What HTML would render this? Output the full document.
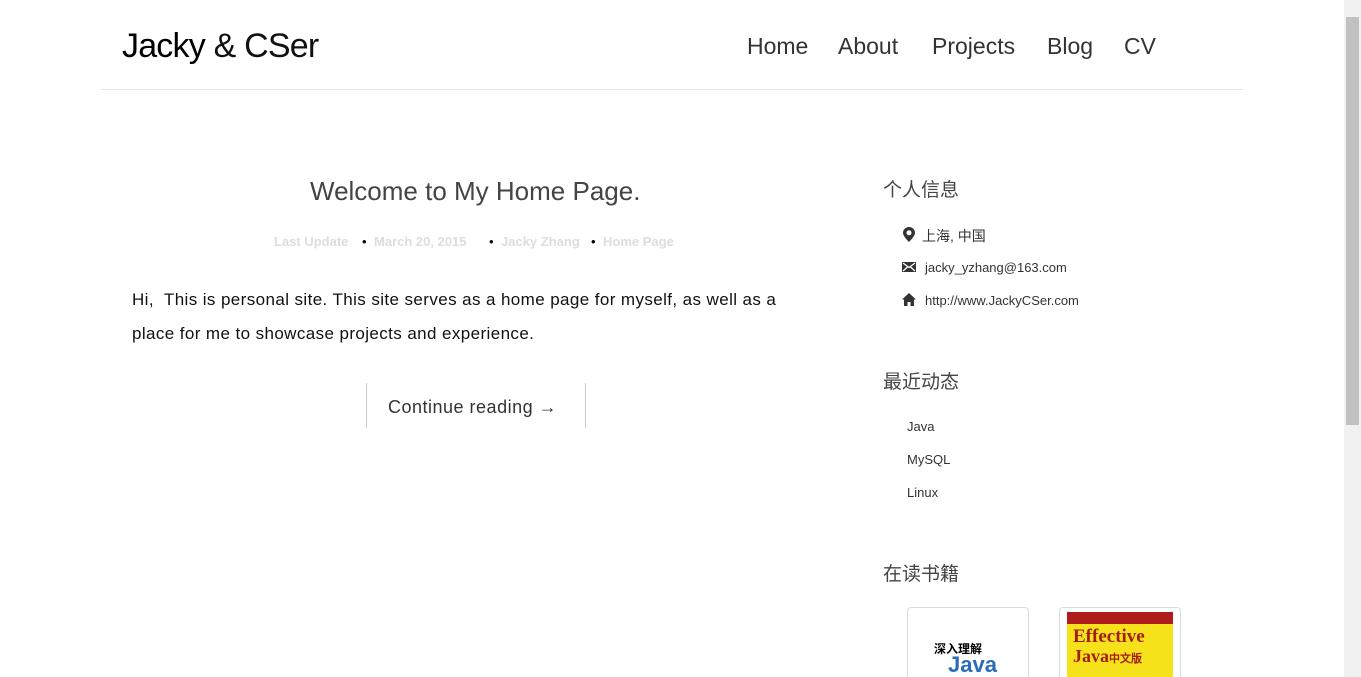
<!DOCTYPE html>
<html><head><meta charset="utf-8"><style>
html,body{margin:0;width:1361px;height:677px;overflow:hidden}
body{background:#fff;font-family:"Liberation Sans","Noto Sans CJK SC",sans-serif;position:relative}
.a{position:absolute;white-space:nowrap}
.sb{position:absolute;right:0;top:0;width:17px;height:677px;background:#f1f1f1}
.th{position:absolute;right:2px;top:17px;width:13px;height:408px;background:#c1c1c1}
.nav{font-size:23px;color:#333;top:33px}
.side{font-size:19px;color:#444}
.li{font-size:13px;color:#333}
.meta{font-size:13px;color:#ddd;font-weight:bold;top:234px}
.dot{font-size:13px;color:#000;top:234px}
</style></head><body>
<div class="a" style="left:122px;top:27px;font-size:34px;color:#000;letter-spacing:-0.8px">Jacky <span style="color:#111">&amp; CSer</span></div>
<div class="a nav" style="left:747px">Home</div>
<div class="a nav" style="left:838px">About</div>
<div class="a nav" style="left:932px">Projects</div>
<div class="a nav" style="left:1047px">Blog</div>
<div class="a nav" style="left:1124px">CV</div>
<div style="position:absolute;left:101px;top:89px;width:1142px;height:1px;background:#e5e5e5"></div>
<div class="a" style="left:310px;top:176px;font-size:26px;color:#444">Welcome to My Home Page.</div>
<div class="a meta" style="left:274px">Last Update</div>
<div class="a dot" style="left:362px">•</div>
<div class="a meta" style="left:374px">March 20, 2015</div>
<div class="a dot" style="left:489px">•</div>
<div class="a meta" style="left:501px">Jacky Zhang</div>
<div class="a dot" style="left:591px">•</div>
<div class="a meta" style="left:603px">Home Page</div>
<div class="a" style="left:132px;top:283px;font-size:17px;color:#111;line-height:34px;letter-spacing:0.4px">Hi,&nbsp; This is personal site. This site serves as a home page for myself, as well as a<br>place for me to showcase projects and experience.</div>
<div style="position:absolute;left:366px;top:383px;width:218px;height:45px;border-left:1px solid #ccc;border-right:1px solid #ccc"></div>
<div class="a" style="left:388px;top:397px;font-size:18px;color:#333;letter-spacing:0.5px">Continue reading →</div>
<div class="a side" style="left:883px;top:175px">个人信息</div>
<svg class="a" style="left:903px;top:227px" width="12" height="15" viewBox="0 0 12 15"><path d="M6 0C2.7 0 0 2.6 0 5.8 0 9.5 6 15 6 15s6-5.5 6-9.2C12 2.6 9.3 0 6 0zm0 8.3A2.5 2.5 0 1 1 6 3.3a2.5 2.5 0 0 1 0 5z" fill="#333"/></svg>
<div class="a li" style="left:922px;top:226px;font-size:14px">上海, 中国</div>
<svg class="a" style="left:902px;top:262px" width="14" height="10" viewBox="0 0 14 10"><path d="M0 0h14v10H0z" fill="#333"/><path d="M1 1l6 4.5L13 1M1 9l4.5-4M13 9L8.5 5" stroke="#fff" stroke-width="1.2" fill="none"/></svg>
<div class="a li" style="left:925px;top:260px">jacky_yzhang@163.com</div>
<svg class="a" style="left:902px;top:293px" width="14" height="13" viewBox="0 0 14 13"><path d="M7 0L0 6.5h2V13h3.5V9h3v4H12V6.5h2z" fill="#333"/></svg>
<div class="a li" style="left:925px;top:293px">http://www.JackyCSer.com</div>
<div class="a side" style="left:883px;top:367px">最近动态</div>
<div class="a li" style="left:907px;top:419px">Java</div>
<div class="a li" style="left:907px;top:452px">MySQL</div>
<div class="a li" style="left:907px;top:485px">Linux</div>
<div class="a side" style="left:883px;top:559px">在读书籍</div>
<div style="position:absolute;left:907px;top:607px;width:120px;height:80px;border:1px solid #ddd;border-radius:4px;background:#fff;overflow:hidden">
<div class="a" style="left:26px;top:32px;font-size:12px;font-weight:bold;color:#000">深入理解</div>
<div class="a" style="left:40px;top:44px;font-size:22px;font-weight:bold;color:#2a6db5">Java</div></div>
<div style="position:absolute;left:1059px;top:607px;width:120px;height:80px;border:1px solid #ddd;border-radius:4px;background:#fff;overflow:hidden">
<div style="position:absolute;left:7px;top:4px;width:106px;height:76px;background:#f5e21a"><div style="height:12px;background:#b01c1c"></div>
<div class="a" style="left:6px;top:14px;font-size:19px;font-weight:bold;color:#a51c12;font-family:'Liberation Serif',serif">Effective</div>
<div class="a" style="left:6px;top:34px;font-size:18px;font-weight:bold;color:#a51c12;font-family:'Liberation Serif',serif">Java<span style="font-size:11px">中文版</span></div></div></div>
<div class="sb"><div class="th"></div></div>
</body></html>
